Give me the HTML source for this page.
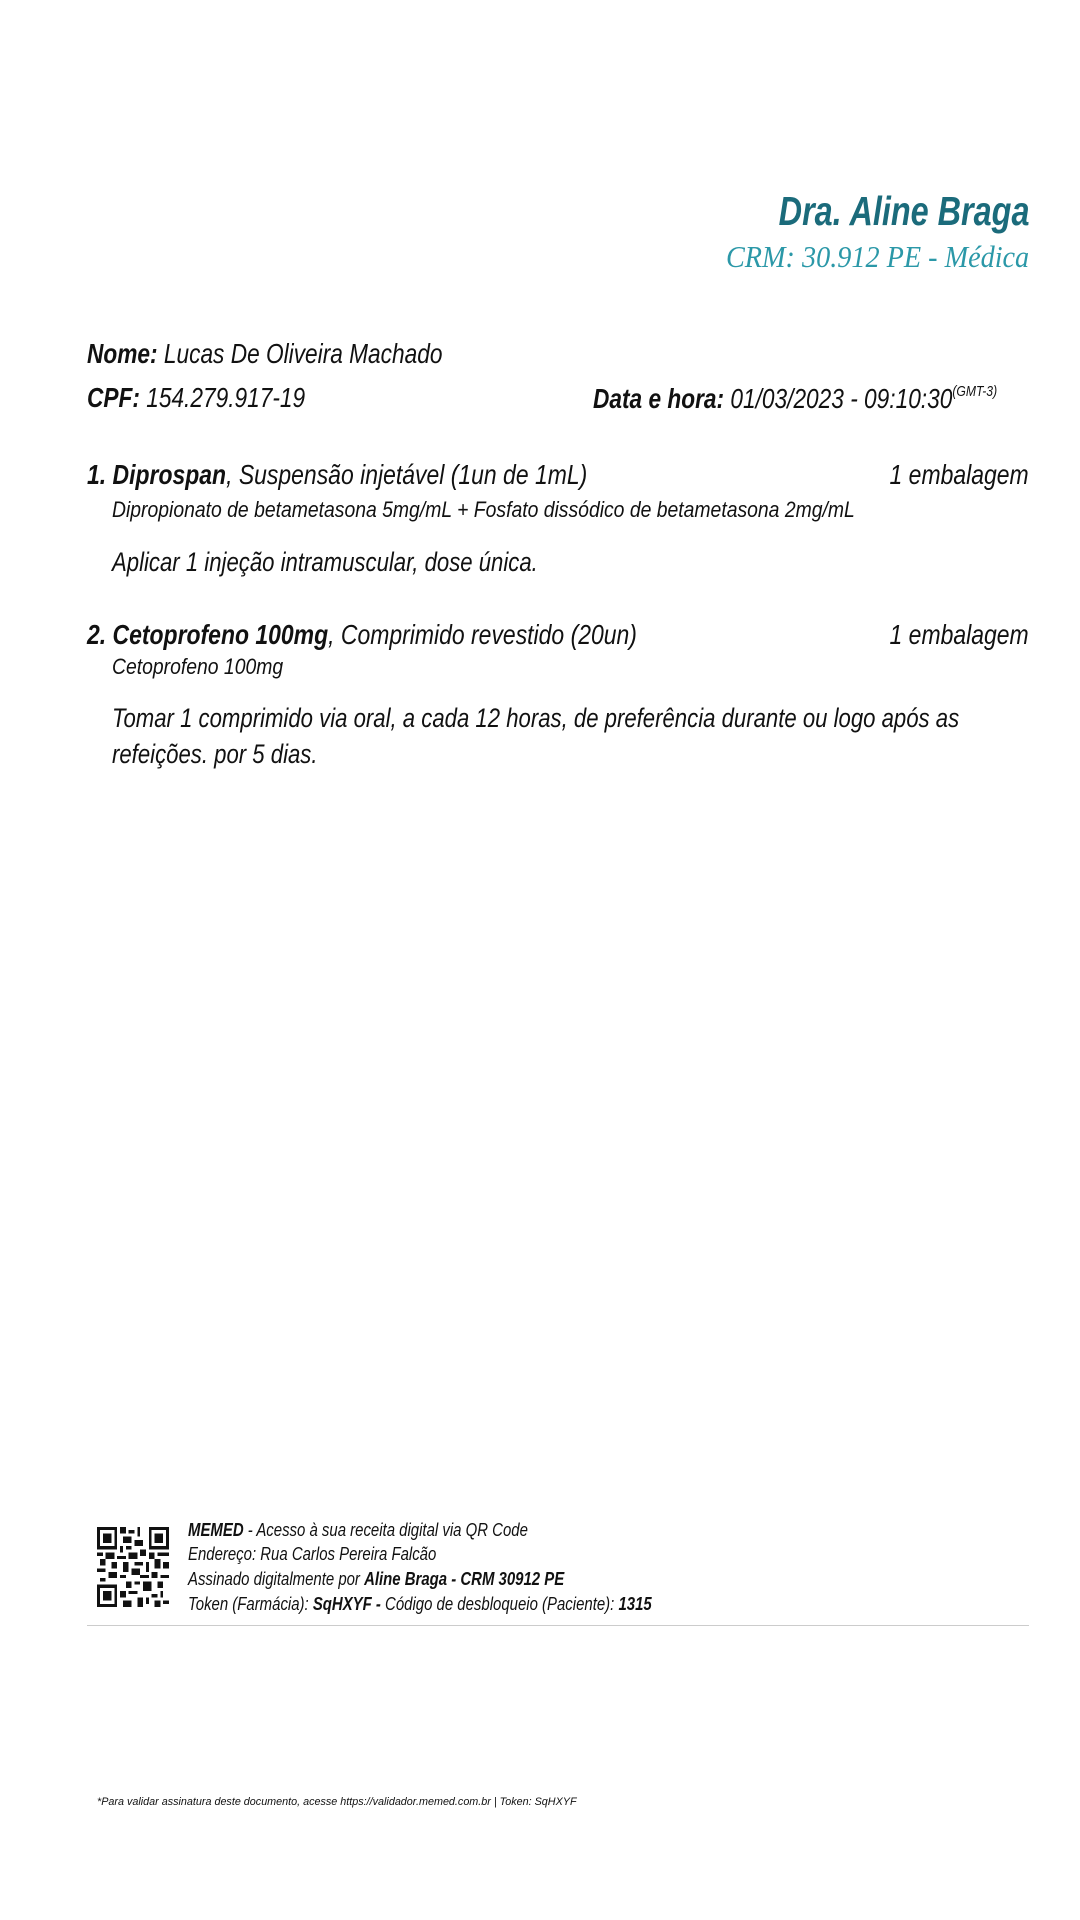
<!DOCTYPE html>
<html><head><meta charset="utf-8"><style>
html,body{margin:0;padding:0;background:#fff}
body{width:1080px;height:1920px;position:relative;overflow:hidden;font-family:"Liberation Sans",sans-serif;font-style:italic;color:#111}
.a{position:absolute;white-space:nowrap;line-height:1;transform-origin:left top}
.r{transform-origin:right top}
b{font-weight:bold}
</style></head><body>
<div class="a r" style="right:51px;top:191px;font-size:41px;font-weight:bold;color:#1b6b7b;transform:scaleX(0.79)">Dra. Aline Braga</div>
<div class="a r" style="right:51px;top:241px;font-size:31px;color:#2b98a8;font-family:'Liberation Serif',serif;transform:scaleX(0.91)">CRM: 30.912 PE - Médica</div>

<div class="a" style="left:87px;top:340px;font-size:28px;transform:scaleX(0.81)"><b>Nome:</b> Lucas De Oliveira Machado</div>
<div class="a" style="left:87px;top:384px;font-size:28px;transform:scaleX(0.81)"><b>CPF:</b> 154.279.917-19</div>
<div class="a" style="left:593px;top:384px;font-size:28px;transform:scaleX(0.81)"><b>Data e hora:</b> 01/03/2023 - 09:10:30<sup style="font-size:15px;vertical-align:12px">(GMT-3)</sup></div>

<div class="a" style="left:87px;top:461px;font-size:28px;transform:scaleX(0.82)"><b>1. Diprospan</b>, Suspensão injetável (1un de 1mL)</div>
<div class="a r" style="right:51px;top:461px;font-size:28px;transform:scaleX(0.82)">1 embalagem</div>
<div class="a" style="left:112px;top:499px;font-size:22px;transform:scaleX(0.88)">Dipropionato de betametasona 5mg/mL + Fosfato dissódico de betametasona 2mg/mL</div>
<div class="a" style="left:112px;top:549px;font-size:27px;transform:scaleX(0.82)">Aplicar 1 injeção intramuscular, dose única.</div>

<div class="a" style="left:87px;top:621px;font-size:28px;transform:scaleX(0.82)"><b>2. Cetoprofeno 100mg</b>, Comprimido revestido (20un)</div>
<div class="a r" style="right:51px;top:621px;font-size:28px;transform:scaleX(0.82)">1 embalagem</div>
<div class="a" style="left:112px;top:656px;font-size:22px;transform:scaleX(0.88)">Cetoprofeno 100mg</div>
<div class="a" style="left:112px;top:705px;font-size:27px;transform:scaleX(0.82)">Tomar 1 comprimido via oral, a cada 12 horas, de preferência durante ou logo após as</div>
<div class="a" style="left:112px;top:741px;font-size:27px;transform:scaleX(0.82)">refeições. por 5 dias.</div>

<svg class="a" style="left:97px;top:1527px" width="72" height="80" viewBox="0 0 25 25" preserveAspectRatio="none" shape-rendering="crispEdges">
<g fill="#111"><path d="M0 0h7v7H0zM18 0h7v7h-7zM0 18h7v7H0z"/></g>
<g fill="#fff"><path d="M1 1h5v5H1zM19 1h5v5h-5zM1 19h5v5H1z"/></g>
<g fill="#111"><path d="M2 2h3v3H2zM20 2h3v3h-3zM2 20h3v3H2z"/>
<path d="M8 0h2v2H8zM11 1h2v1h-2zM14 0h1v3h-1zM9 3h3v2H9zM13 4h3v2h-3zM8 6h1v2H8zM10 6h2v1h-2zM15 7h2v2h-2zM0 8h2v1H0zM3 8h3v2H3zM7 9h3v1H7zM11 8h3v2h-3zM18 8h2v2h-2zM21 8h4v1h-4zM1 10h2v2H1zM5 11h2v2H5zM9 11h2v3H9zM13 11h3v1h-3zM17 11h1v3h-1zM20 10h2v3h-2zM23 11h2v2h-2zM0 13h3v1H0zM4 14h3v2H4zM8 15h2v1H8zM12 13h3v2h-3zM15 15h3v1h-3zM19 14h2v2h-2zM22 15h3v1h-3zM1 16h2v1H1zM10 17h2v2h-2zM13 17h2v1h-2zM16 17h3v3h-3zM21 17h2v2h-2zM8 20h2v2H8zM11 20h3v1h-3zM14 22h2v3h-2zM19 21h2v1h-2zM22 20h1v2h-1zM9 23h3v2H9zM17 22h1v2h-1zM20 23h2v2h-2zM23 23h2v1h-2z"/></g>
</svg>
<div class="a" style="left:188px;top:1521px;font-size:18px;transform:scaleX(0.83)"><b>MEMED</b> - Acesso à sua receita digital via QR Code</div>
<div class="a" style="left:188px;top:1545px;font-size:18px;transform:scaleX(0.83)">Endereço: Rua Carlos Pereira Falcão</div>
<div class="a" style="left:188px;top:1570px;font-size:18px;transform:scaleX(0.83)">Assinado digitalmente por <b>Aline Braga - CRM 30912 PE</b></div>
<div class="a" style="left:188px;top:1595px;font-size:18px;transform:scaleX(0.83)">Token (Farmácia): <b>SqHXYF -</b> Código de desbloqueio (Paciente): <b>1315</b></div>
<div class="a" style="left:87px;top:1625px;width:942px;height:1px;background:#ccc"></div>

<div class="a" style="left:97px;top:1797px;font-size:11px;transform:scaleX(0.98)">*Para validar assinatura deste documento, acesse https://validador.memed.com.br | Token: SqHXYF</div>
</body></html>
